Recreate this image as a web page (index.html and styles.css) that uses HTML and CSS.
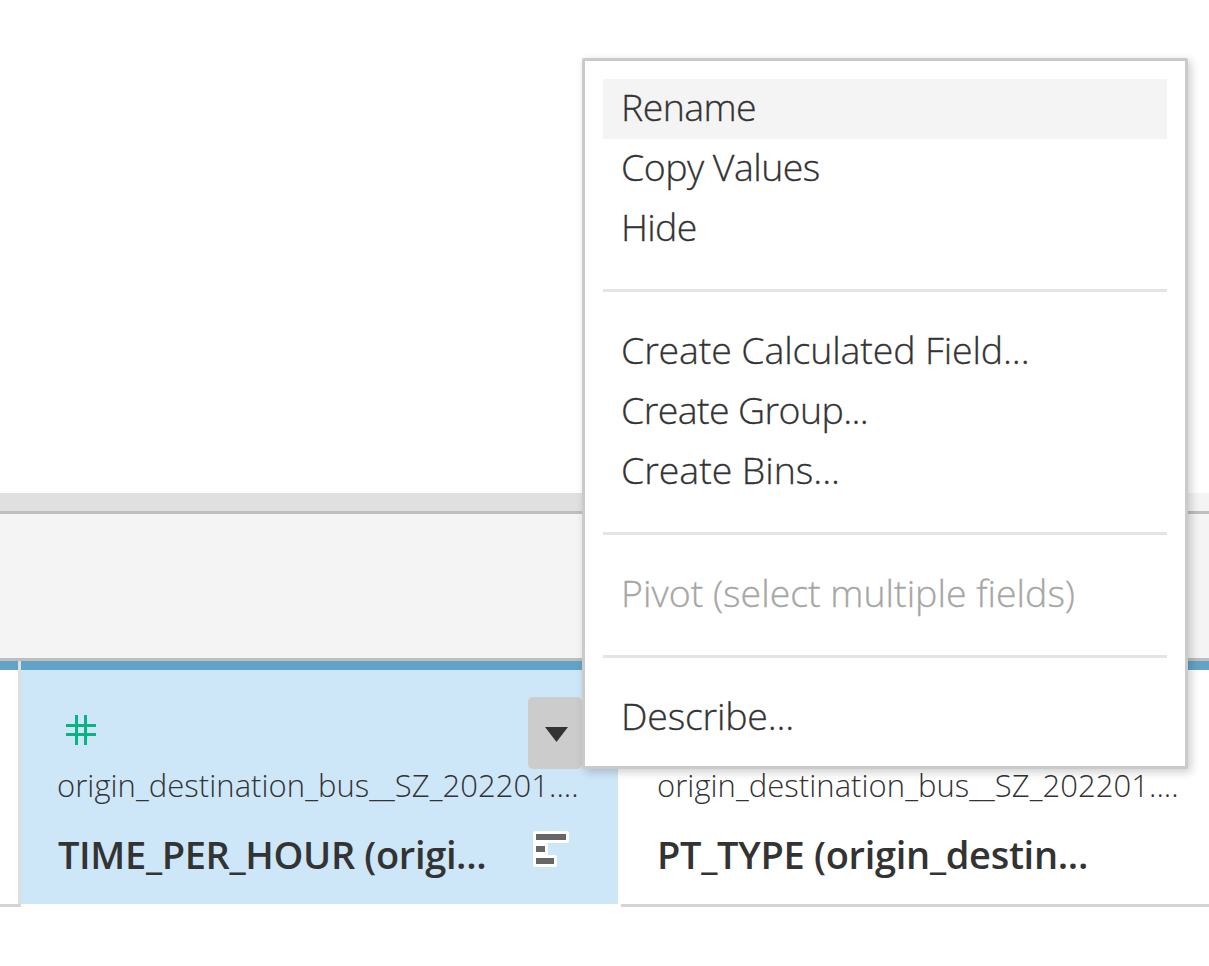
FILE: index.html
```html
<!DOCTYPE html>
<html lang="en">
<head>
<meta charset="utf-8">
<title>Data Source</title>
<link rel="stylesheet" href="styles.css">
</head>
<body>
<div class="page">
  <div class="canvas"></div>
  <div class="splitter"><div class="splitter-grip"></div></div>
  <div class="toolbar"></div>
  <div class="grid">
    <div class="column column-prev"></div>
    <div class="column column-selected">
      <div class="column-tools">
        <svg class="type-icon" width="30" height="30" viewBox="0 0 30 30"><path d="M9 0h3v30H9zM18 0h3v30h-3zM0 9h30v3H0zM0 18h30v3H0z" fill="#0bb283"/></svg>
        <div class="menu-button"><svg width="23" height="15" viewBox="0 0 23 15"><path d="M0 0h23L11.500 15z" fill="#333"/></svg></div>
      </div>
      <div class="source">origin_destination_bus__SZ_202201....</div>
      <div class="title-row">
        <div class="title title-time">TIME_PER_HOUR (origi...</div>
        <svg class="sort-icon" width="36" height="36" viewBox="0 0 36 36"><g fill="#fff"><rect width="36" height="12" rx="2.500"/><rect y="12" width="15" height="12" rx="2.500"/><rect y="24" width="24" height="12" rx="2.500"/><rect y="4" width="12" height="28"/></g><path d="M3 3h30v6H3zM3 15h9v6H3zM3 27h18v6H3z" fill="#666"/></svg>
      </div>
    </div>
    <div class="column column-next">
      <div class="column-tools"></div>
      <div class="source">origin_destination_bus__SZ_202201....</div>
      <div class="title-row"><div class="title title-type">PT_TYPE (origin_destin...</div></div>
    </div>
  </div>
</div>
<div class="menu">
  <div class="item item-active rename">Rename</div>
  <div class="item copy">Copy Values</div>
  <div class="item hide">Hide</div>
  <div class="separator"></div>
  <div class="item">Create Calculated Field...</div>
  <div class="item group">Create Group...</div>
  <div class="item bins">Create Bins...</div>
  <div class="separator"></div>
  <div class="item item-disabled">Pivot (select multiple fields)</div>
  <div class="separator"></div>
  <div class="item describe">Describe...</div>
</div>
</body>
</html>
```
FILE: styles.css
```css
* { box-sizing: border-box; }
body {
  margin: 0;
  background: #fff;
  color: #333;
  font-family: "Open Sans", "Noto Sans", sans-serif;
  overflow: hidden;
}
svg { display: block; }
.page { display: flex; flex-direction: column; height: 966px; }
.canvas { height: 493px; }
.splitter { height: 21px; background: #f4f4f4; border-bottom: 3px solid #bebebe; }
.splitter-grip { width: 600px; height: 18px; background: #e0e0e0; }
.toolbar { height: 147px; background: #f4f4f4; border-bottom: 3px solid #bebebe; }
.grid { display: grid; grid-template-columns: 21px 597px 588px; column-gap: 0; height: 246px; }
.column { border-top: 9px solid #62a4c7; white-space: nowrap; }
.column-prev {
  border-top: 0;
  border-bottom: 3px solid #d4d4d4;
  background: linear-gradient(#62a4c7, #62a4c7) 0 0 / 18px 9px no-repeat,
    linear-gradient(#dedede, #dedede) 18px 0 / 3px 100% no-repeat;
}
.column-selected { height: 243px; padding: 27px 36px 0; background: #cde6f8; }
.column-next { margin-left: 3px; width: 588px; padding: 27px 0 0 36px; border-bottom: 3px solid #d4d4d4; }
.column-tools { display: flex; justify-content: space-between; height: 70px; }
.type-icon { margin: 18px 0 0 9px; }
.menu-button {
  display: flex;
  width: 54px;
  height: 72px;
  padding: 30px 0 0 17px;
  border-radius: 5px;
  background: #ccc;
}
.source {
  height: 36px;
  font-size: 31px;
  font-weight: 300;
  line-height: 37px;
  letter-spacing: 0.050px;
}
.title-row { display: flex; justify-content: space-between; margin-top: 30px; padding-right: 13px; }
.title { height: 40px; font-size: 38px; font-weight: 580; line-height: 42px; }
.title-time { padding-left: 1px; letter-spacing: -0.350px; }
.title-type { letter-spacing: -0.300px; }
.sort-icon { margin-top: -2px; }
.menu {
  position: absolute;
  left: 582px;
  top: 58px;
  width: 606px;
  height: 711px;
  padding: 18px;
  border: 3px solid #cacaca;
  border-radius: 2px;
  background: #fff;
  box-shadow: 3px 3px 10px rgba(0, 0, 0, 0.200);
}
.item {
  height: 60px;
  padding-left: 18px;
  font-size: 37.500px;
  font-weight: 300;
  line-height: 56px;
  letter-spacing: -0.130px;
  white-space: nowrap;
  -webkit-text-stroke: 0.300px currentColor;
}
.item-active { background: #f4f4f4; }
.item-disabled { color: #a6a6a6; letter-spacing: 0; }
.rename { letter-spacing: -0.600px; }
.copy { letter-spacing: -0.550px; }
.hide { letter-spacing: -0.700px; }
.group { letter-spacing: -0.600px; }
.bins { letter-spacing: -0.050px; }
.describe { letter-spacing: -0.200px; }
.separator { height: 3px; margin: 30px 0; background: #e4e4e4; }
```
